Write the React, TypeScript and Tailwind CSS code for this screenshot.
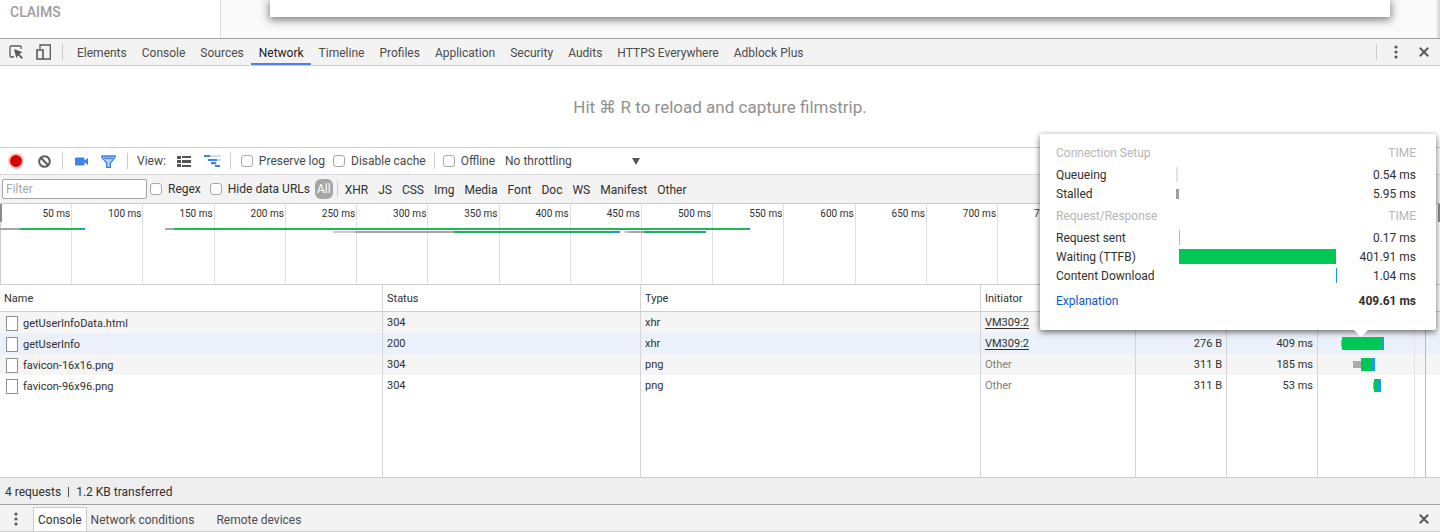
import React from 'react'
import clsx from 'clsx'

const tabs = [
  'Elements', 'Console', 'Sources', 'Network', 'Timeline', 'Profiles',
  'Application', 'Security', 'Audits', 'HTTPS Everywhere', 'Adblock Plus',
]

const filters = ['XHR', 'JS', 'CSS', 'Img', 'Media', 'Font', 'Doc', 'WS', 'Manifest', 'Other']

const ticks = Array.from({ length: 15 }, (_, i) => `${(i + 1) * 50} ms`)

type Bar = { x: number; w: number; fill: string; y?: number; h?: number }

const overview: Bar[] = [
  { x: 0, y: 24, w: 20, fill: '#a6a6a6' },
  { x: 20, y: 24, w: 62, fill: '#1db954' },
  { x: 82, y: 24, w: 3, fill: '#2196d3' },
  { x: 165, y: 24, w: 9, fill: '#a6a6a6' },
  { x: 174, y: 24, w: 574, fill: '#1db954' },
  { x: 748, y: 24, w: 2, fill: '#2196d3' },
  { x: 333, y: 27, w: 22, fill: '#cccccc' },
  { x: 355, y: 27, w: 99, fill: '#a6a6a6' },
  { x: 454, y: 27, w: 160, fill: '#1fae68' },
  { x: 614, y: 27, w: 6, fill: '#2196d3' },
  { x: 624, y: 27, w: 5, fill: '#cccccc' },
  { x: 629, y: 27, w: 15, fill: '#a6a6a6' },
  { x: 644, y: 27, w: 58, fill: '#1fae68' },
  { x: 702, y: 27, w: 4, fill: '#2196d3' },
]

type Request = {
  name: string
  status: number
  type: string
  initiator: string
  size?: string
  time?: string
  bars: Bar[]
}

const requests: Request[] = [
  { name: 'getUserInfoData.html', status: 304, type: 'xhr', initiator: 'VM309:2', bars: [] },
  {
    name: 'getUserInfo', status: 200, type: 'xhr', initiator: 'VM309:2', size: '276 B', time: '409 ms',
    bars: [
      { x: 23, w: 1, y: 7, h: 7, fill: '#a6a6a6' },
      { x: 24, w: 39, fill: '#00c853' },
      { x: 63, w: 3, fill: '#1a9fe0' },
    ],
  },
  {
    name: 'favicon-16x16.png', status: 304, type: 'png', initiator: 'Other', size: '311 B', time: '185 ms',
    bars: [
      { x: 35, w: 8, y: 7, h: 7, fill: '#aaaaaa' },
      { x: 43, w: 11, fill: '#00c853' },
      { x: 54, w: 3, fill: '#1a9fe0' },
    ],
  },
  {
    name: 'favicon-96x96.png', status: 304, type: 'png', initiator: 'Other', size: '311 B', time: '53 ms',
    bars: [
      { x: 55, w: 1, y: 7, h: 7, fill: '#aaaaaa' },
      { x: 56, w: 4, fill: '#00c853' },
      { x: 60, w: 3, fill: '#1a9fe0' },
    ],
  },
]

const Divider = ({ className }: { className?: string }) => (
  <span className={clsx('h-4 w-px shrink-0 bg-[#cccccc]', className)} />
)

const Dots = () => (
  <svg width="4" height="14" viewBox="0 0 4 14" fill="#5a5a5a" aria-hidden="true">
    <circle cx="2" cy="2" r="1.6" />
    <circle cx="2" cy="7" r="1.6" />
    <circle cx="2" cy="12" r="1.6" />
  </svg>
)

const Close = () => (
  <svg width="10" height="10" viewBox="0 0 10 10" stroke="#5a5a5a" strokeWidth="2" aria-hidden="true">
    <path d="M.8.8 9.2 9.2M9.2.8.8 9.2" />
  </svg>
)

const Check = ({ label, className }: { label: string; className?: string }) => (
  <label className={clsx('flex shrink-0 items-center gap-1.5 whitespace-nowrap', className)}>
    <input
      type="checkbox"
      className="size-3 appearance-none rounded-[3px] border border-[#a8a8a8] bg-white checked:bg-[#4285f4]"
    />
    {label}
  </label>
)

const PageTop = () => (
  <div className="flex h-[38px] overflow-hidden bg-[#fafafa]">
    <div className="w-[221px] shrink-0 border-r border-[#dedede] bg-white pt-1 pl-2.5 text-sm leading-4 font-medium text-[#9e9e9e]">
      CLAIMS
    </div>
    <div className="mr-[46px] ml-[49px] h-[17px] flex-1 bg-white shadow-[0_2px_8px_1px_rgba(0,0,0,0.5)]" />
    <div className="w-1 bg-linear-to-r from-[#f5f5f5] to-[#cfcfcf]" />
  </div>
)

const TabBar = () => (
  <div className="flex h-7 items-center border-t border-b border-t-[#a3a3a3] border-b-[#cccccc] bg-[#f3f3f3]">
    <button aria-label="Inspect element" className="ml-[9px]">
      <svg width="15" height="15" viewBox="0 0 15 15" fill="none" aria-hidden="true">
        <path d="M5 12H2.2A1.2 1.2 0 0 1 1 10.800V2.200A1.200 1.200 0 0 1 2.200 1H11a1.200 1.200 0 0 1 1.200 1.200V4" stroke="#5a5a5a" strokeWidth="1.300" />
        <path d="m5 4 8.500 3.300-3.200 1.700L14 12.700 12.700 14 9 10.300l-1.700 2.900z" fill="#5a5a5a" />
      </svg>
    </button>
    <button aria-label="Toggle device toolbar" className="ml-3">
      <svg width="15" height="16" viewBox="0 0 15 16" fill="none" stroke="#5a5a5a" aria-hidden="true">
        <path d="M4 5V1h10.300v14H7" strokeWidth="1.300" />
        <path d="M1 6h6v9H1z" strokeWidth="1.600" />
      </svg>
    </button>
    <Divider className="mr-1.5 ml-[11px]" />
    <nav className="flex h-full">
      {tabs.map((tab) => (
        <button
          key={tab}
          className={clsx(
            'border-b-2 pt-[3px] pr-[7px] pl-2 whitespace-nowrap',
            tab === 'Network' ? 'border-[#4a80e8] text-[#222222]' : 'border-transparent text-[#4c4c4c]',
          )}
        >
          {tab}
        </button>
      ))}
    </nav>
    <Divider className="ml-auto" />
    <button aria-label="Customize and control DevTools" className="ml-[17px]"><Dots /></button>
    <button aria-label="Close DevTools" className="mr-[11px] ml-[21px]"><Close /></button>
  </div>
)

const Toolbar = () => (
  <div className="flex h-[27px] items-center border-b border-[#dadada] bg-white text-[#484848]">
    <button aria-label="Record network log" className="ml-2 size-4 rounded-full border-2 border-[#f8c4c4] bg-[#d80000]" />
    <button aria-label="Clear" className="ml-[14px]">
      <svg width="13" height="13" viewBox="0 0 13 13" fill="none" stroke="#5a5a5a" strokeWidth="2" aria-hidden="true">
        <circle cx="6.500" cy="6.500" r="5.300" />
        <path d="m2.800 2.800 7.400 7.400" />
      </svg>
    </button>
    <Divider className="ml-[11px]" />
    <button aria-label="Capture screenshots" className="ml-3">
      <svg width="13" height="9" viewBox="0 0 13 9" fill="#4080ef" aria-hidden="true">
        <path d="M1 .5h7.500a1 1 0 0 1 1 1v2L13 1v7L9.500 5.500v2a1 1 0 0 1-1 1H1a1 1 0 0 1-1-1v-6a1 1 0 0 1 1-1z" />
      </svg>
    </button>
    <button aria-label="Filter" className="ml-[13px]">
      <svg width="15" height="13" viewBox="0 0 15 13" fill="#b9d3fb" stroke="#3b7cec" strokeWidth="1.300" aria-hidden="true">
        <path d="M.9 1h13.200v1.600L9.300 8v4.300H5.700V8L.9 2.600z" />
        <path d="M3 3.200h9" />
      </svg>
    </button>
    <Divider className="ml-[11px]" />
    <span className="ml-[9px]">View:</span>
    <button aria-label="Use large request rows" className="ml-[11px]">
      <svg width="14" height="11" viewBox="0 0 14 11" fill="#555555" aria-hidden="true">
        <path d="M0 0h4v3H0zM5 0h9v2H5zM0 4h4v3H0zM5 4h9v3H5zM0 8h4v3H0zM5 9h9v2H5z" />
      </svg>
    </button>
    <button aria-label="Show overview" className="ml-[13px]">
      <svg width="17" height="12" viewBox="0 0 17 12" aria-hidden="true">
        <path d="M6 0h11v2H6zM9 4h8v2H9zM8 8h5v2H8z" fill="#c9dcfb" />
        <path d="M0 0h6v2H0zM4 4h5v2H4zM9 4h4v2H9zM7 7h5v2H7zM11 10h5v2h-5z" fill="#4080ef" />
      </svg>
    </button>
    <Divider className="ml-[9px]" />
    <Check label="Preserve log" className="ml-[10px]" />
    <Check label="Disable cache" className="ml-2" />
    <Divider className="ml-2" />
    <Check label="Offline" className="ml-2" />
    <div className="relative ml-[10px] flex w-[135px] items-center">
      <select aria-label="Throttling" className="w-full appearance-none bg-transparent">
        <option>No throttling</option>
      </select>
      <svg className="pointer-events-none absolute right-0" width="8" height="7" viewBox="0 0 8 7" fill="#555555" aria-hidden="true">
        <path d="M0 0h8L4 7z" />
      </svg>
    </div>
  </div>
)

const FilterBar = () => (
  <div className="flex h-[29px] items-center border-b border-[#cccccc] bg-[#f3f3f3] text-[#303030]">
    <input
      type="text"
      aria-label="Filter requests"
      placeholder="Filter"
      className="ml-0.5 h-5 w-[145px] rounded-[2px] border border-[#a3a3a3] bg-white px-[3px] placeholder:text-[#a9a9a9]"
    />
    <Check label="Regex" className="ml-[3px]" />
    <Check label="Hide data URLs" className="ml-[9px]" />
    <button className="ml-[5px] h-5 rounded-md bg-[#a6a6a6] px-0.5 text-white">All</button>
    <Divider className="ml-1" />
    <div className="ml-0.5 flex">
      {filters.map((f) => (
        <button key={f} className="px-[5px] pt-px">{f}</button>
      ))}
    </div>
  </div>
)

const Overview = () => (
  <div className="relative h-[81px] border-b border-[#cccccc] bg-white">
    <div className="flex h-full pl-px">
      {ticks.map((t) => (
        <div key={t} className="w-[4.95%] shrink-0 overflow-hidden border-r border-[#e0e0e0] pt-1 pr-px text-right text-[10px] leading-3 whitespace-nowrap text-[#303030]">
          {t}
        </div>
      ))}
    </div>
    <svg className="absolute inset-0 size-full" viewBox="0 0 1440 80" preserveAspectRatio="none" aria-hidden="true">
      <rect x="0" y="0" width="1" height="80" fill="#cccccc" />
      {overview.map((b, i) => (
        <rect key={i} x={b.x} y={b.y} width={b.w} height="2" fill={b.fill} />
      ))}
      <rect x="0" y="0" width="2" height="18" fill="#8c8c8c" />
      <rect x="1438" y="0" width="2" height="18" fill="#8c8c8c" />
    </svg>
  </div>
)

const cell = 'border-r border-[#d4d4d4] px-1 pt-px pb-0 font-normal whitespace-nowrap'

const RequestTable = () => (
  <table className="w-full table-fixed border-separate border-spacing-0 bg-white text-left text-[11px] text-[#303030]">
    <colgroup>
      <col />
      <col className="w-[258px]" />
      <col className="w-[340px]" />
      <col className="w-[155px]" />
      <col className="w-[91px]" />
      <col className="w-[91px]" />
      <col className="w-[108px]" />
      <col className="w-[14px]" />
    </colgroup>
    <thead>
      <tr className="h-[27px]">
        {['Name', 'Status', 'Type', 'Initiator'].map((h) => (
          <th key={h} className={clsx(cell, 'border-b border-b-[#cccccc]')}>{h}</th>
        ))}
        <td colSpan={4} className="border-b border-b-[#cccccc]" />
      </tr>
    </thead>
    <tbody>
      {requests.map((r, i) => (
        <tr key={r.name} className={clsx('h-[21px]', i === 1 ? 'bg-[#eaf1fb]' : i % 2 === 0 && 'bg-[#f5f5f5]')}>
          <td className={cell}>
            <div className="flex items-center gap-[5px] pt-px pl-0.5">
              <span className="h-[15px] w-3 border border-[#8f8f8f] bg-white" />
              {r.name}
            </div>
          </td>
          <td className={cell}>{r.status}</td>
          <td className={cell}>{r.type}</td>
          <td className={cell}>
            {r.initiator === 'Other' ? (
              <span className="text-[#808080]">Other</span>
            ) : (
              <a href="#source" className="underline underline-offset-2">{r.initiator}</a>
            )}
          </td>
          <td className={clsx(cell, 'text-right')}>{r.size}</td>
          <td className={clsx(cell, 'border-[#bcbcbc] text-right')}>{r.time}</td>
          <td className="border-r border-[#bcbcbc] p-0">
            <svg className="block" width="107" height="21" viewBox="0 0 107 21" aria-hidden="true">
              <rect x="96" width="1" height="21" fill="#e2e2e2" />
              {r.bars.map((b) => (
                <rect key={b.x} x={b.x} y={b.y ?? 4} width={b.w} height={b.h ?? 13} fill={b.fill} />
              ))}
            </svg>
          </td>
          <td />
        </tr>
      ))}
      <tr className="h-[81px]">
        <td className={cell} />
        <td className={cell} />
        <td className={cell} />
        <td className={cell} />
        <td className={cell} />
        <td className={clsx(cell, 'border-[#bcbcbc]')} />
        <td className="border-r border-[#bcbcbc] p-0">
          <div className="mr-[10px] h-[81px] border-r border-[#e2e2e2]" />
        </td>
        <td />
      </tr>
    </tbody>
  </table>
)

const TimingHead = ({ title }: { title: string }) => (
  <tr className="h-[25px] text-[#b5b5b5]">
    <th scope="colgroup" colSpan={2} className="p-0 text-left font-normal">{title}</th>
    <th className="p-0 text-right font-normal">TIME</th>
  </tr>
)

const TimingRow = ({ label, value, bar }: { label: string; value: string; bar: Bar }) => (
  <tr className="h-[19px]">
    <th scope="row" className="p-0 text-left font-normal whitespace-nowrap">{label}</th>
    <td className="p-0">
      <svg className="block" width="161" height="15" viewBox="0 0 161 15" aria-hidden="true">
        <rect x={bar.x} y={bar.y ?? 0} width={bar.w} height={bar.h ?? 15} fill={bar.fill} />
      </svg>
    </td>
    <td className="p-0 text-right whitespace-nowrap">{value}</td>
  </tr>
)

const TimingPopover = () => (
  <div className="absolute top-[134px] right-1 w-[396px] rounded-[2px] bg-white pt-1.5 pr-5 pb-[14px] pl-4 text-[#303030] shadow-[0_2px_6px_rgba(0,0,0,0.6)]">
    <table className="w-full table-fixed border-collapse">
      <colgroup>
        <col className="w-[120px]" />
        <col className="w-[161px]" />
        <col />
      </colgroup>
      <tbody>
        <TimingHead title="Connection Setup" />
        <TimingRow label="Queueing" value="0.54 ms" bar={{ x: 0, w: 2, fill: '#e4e4e4' }} />
        <TimingRow label="Stalled" value="5.95 ms" bar={{ x: 0, w: 3, y: 3, h: 10, fill: '#a0a0a0' }} />
        <TimingHead title="Request/Response" />
        <TimingRow label="Request sent" value="0.17 ms" bar={{ x: 3, w: 1, fill: '#b4b4b4' }} />
        <TimingRow label="Waiting (TTFB)" value="401.91 ms" bar={{ x: 3, w: 157, fill: '#00c853' }} />
        <TimingRow label="Content Download" value="1.04 ms" bar={{ x: 160, w: 1, fill: '#1a9fe0' }} />
        <tr className="h-[31px]">
          <td className="p-0"><a href="#explanation" className="text-[#1155cc]">Explanation</a></td>
          <td colSpan={2} className="p-0 text-right font-bold">409.61 ms</td>
        </tr>
      </tbody>
    </table>
    <svg className="absolute top-full left-[314px]" width="14" height="7" viewBox="0 0 14 7" fill="#ffffff" aria-hidden="true">
      <path d="M0 0h14L7 7z" />
    </svg>
  </div>
)

const Drawer = () => (
  <div className="flex h-7 items-end border-t border-b border-t-[#a3a3a3] border-b-[#cccccc] bg-[#f3f3f3] text-[#4c4c4c]">
    <button aria-label="More tools" className="mr-[15px] mb-[5px] ml-[14px]"><Dots /></button>
    <button className="h-6 border border-b-0 border-[#cccccc] bg-white px-1 text-[#303030]">Console</button>
    <button className="h-6 px-1 pt-px">Network conditions</button>
    <button className="ml-[14px] h-6 px-1 pt-px">Remote devices</button>
    <button aria-label="Close drawer" className="mr-[11px] mb-[7px] ml-auto"><Close /></button>
  </div>
)

export default function App() {
  return (
    <div className="relative overflow-hidden bg-white font-[Roboto,sans-serif] text-[12px] leading-4">
      <PageTop />
      <TabBar />
      <div className="flex h-[82px] items-center justify-center border-b border-[#cccccc] text-[17px] text-[#909090]">
        Hit ⌘ R to reload and capture filmstrip.
      </div>
      <Toolbar />
      <FilterBar />
      <Overview />
      <RequestTable />
      <div className="flex h-[27px] items-center gap-[7px] border-t border-[#cccccc] bg-[#eeeeee] pt-px pl-[5px] text-[#303030]">
        <span>4 requests</span>
        <span className="h-2.5 w-px bg-[#505050]" />
        <span>1.2 KB transferred</span>
      </div>
      <Drawer />
      <TimingPopover />
    </div>
  )
}
